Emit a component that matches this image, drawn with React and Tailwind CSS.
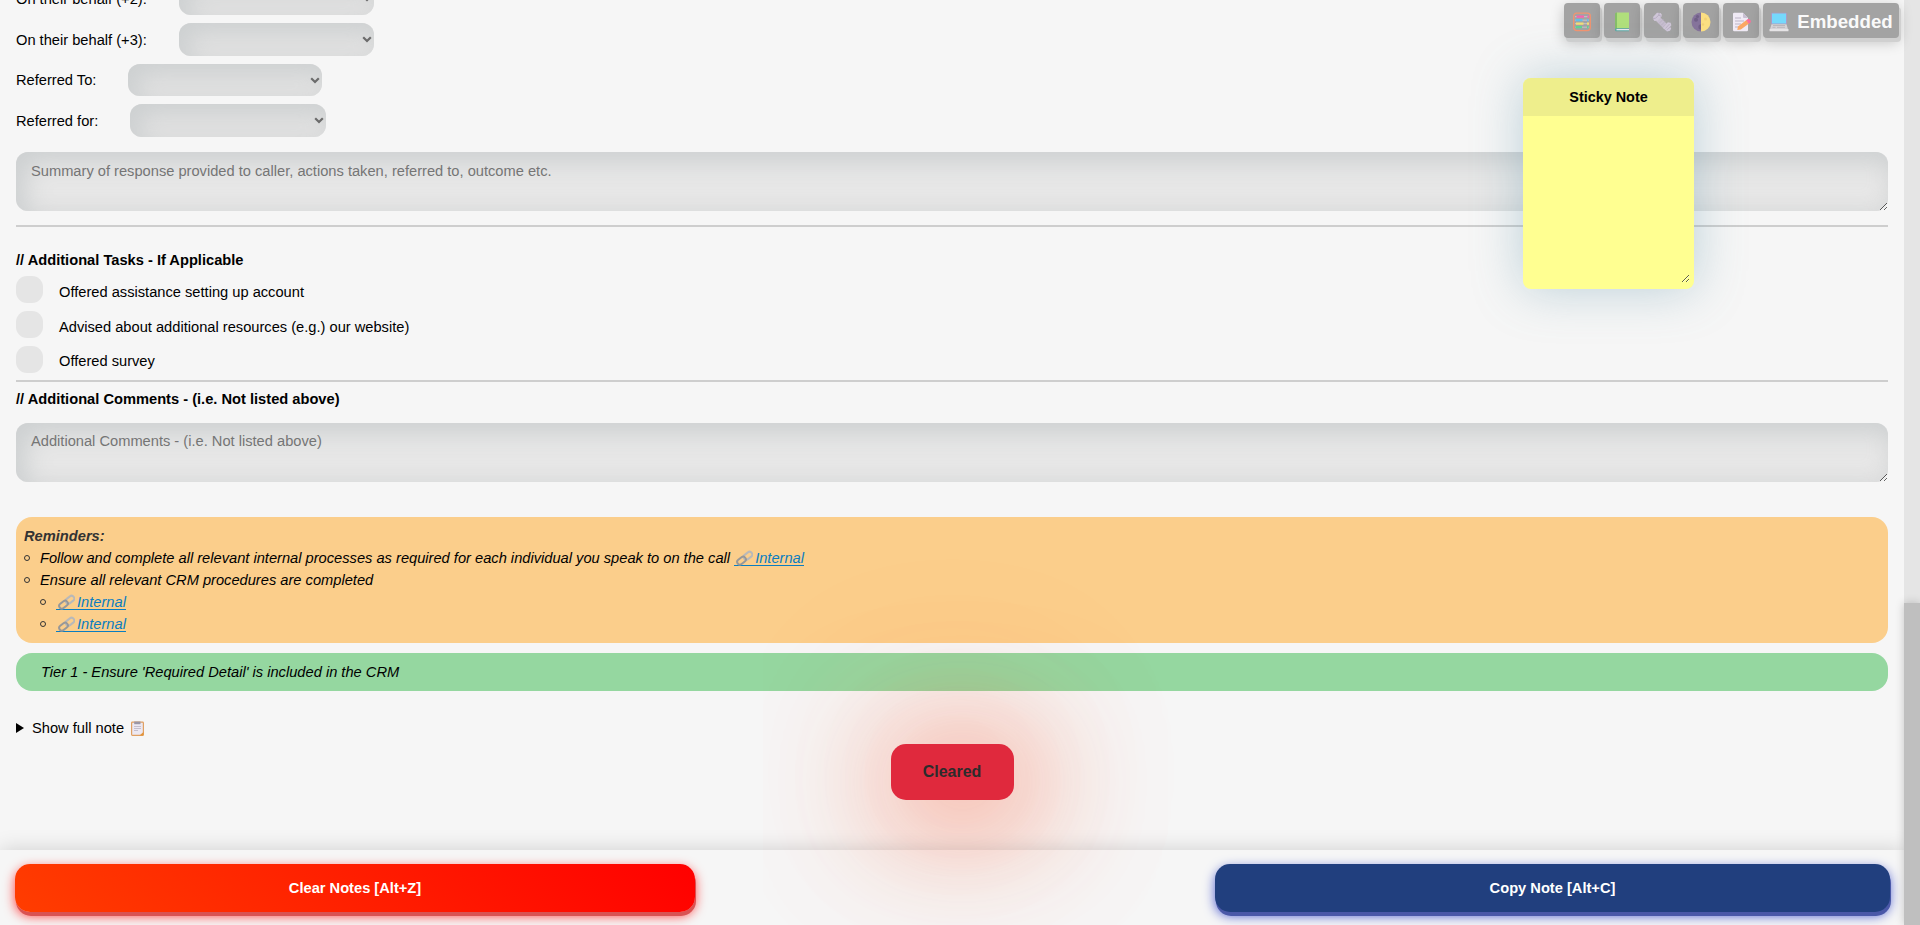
import React from "react";

const inset = "shadow-[inset_10px_10px_24px_#cdd0d1,inset_-4px_-4px_20px_#e0e0e0]";

function SelectRow({ label, row, select }) {
  return (
    <div className={"flex items-center " + row}>
      <span className="whitespace-nowrap text-[14.667px] leading-[18px] text-black">{label}</span>
      <button aria-label={label} className={"flex shrink-0 items-center justify-end rounded-[12px] bg-[#e2e2e2] pr-[2px] " + inset + " " + select}>
        <svg width="10" height="7" viewBox="0 0 10 7" fill="none">
          <path d="M1.200 1.200L5 5l3.800-3.800" stroke="#6b6b6b" strokeWidth="2.200" />
        </svg>
      </button>
    </div>
  );
}

function Check({ label, row, text }) {
  return (
    <div className={"flex items-start " + row}>
      <span className="h-[27px] w-[27px] shrink-0 rounded-[11px] bg-[#e5e5e5]" />
      <span className={"ml-4 text-[14.667px] leading-[18px] " + text}>{label}</span>
    </div>
  );
}

function Area({ placeholder, className }) {
  return (
    <textarea
      placeholder={placeholder}
      className={"block h-[59px] w-full shrink-0 rounded-[12px] border-0 bg-[#e7e7e7] px-[15px] text-[14.667px] leading-[18px] placeholder:text-[#757575] shadow-[inset_10px_10px_26px_#cdd0d1,inset_-4px_-4px_20px_#e0e0e0] resize " + className}
    />
  );
}

function LinkText() {
  return (
    <a className="inline-flex h-[16px] items-baseline border-b border-[#0a7dc0] leading-[17px] text-[#0a7dc0]">
      <svg className="ml-[2px] mr-[2px] self-start" width="17" height="16" viewBox="0 0 17 16" fill="none" strokeWidth="2">
        <rect x="7.2" y="3" width="9.5" height="5.4" rx="2.7" transform="rotate(-38 12 5.7)" stroke="#b9b9b9" />
        <rect x="0.8" y="8" width="9.5" height="5.4" rx="2.7" transform="rotate(-38 5.5 10.7)" stroke="#989898" />
      </svg>
      Internal
    </a>
  );
}

function Bullet() {
  return <span className="mt-[8px] h-[6px] w-[6px] shrink-0 rounded-full border-[1.5px] border-[#333]" />;
}

function Tool({ children, width }) {
  return (
    <button className={"flex h-[35px] shrink-0 items-center justify-center rounded-[4px] bg-[#a3a3a3] pt-[2px] shadow-[2px_4px_0_#d0d0d0,0_4px_14px_rgba(0,0,0,0.22)] " + width}>
      {children}
    </button>
  );
}

function Abacus() {
  return (
    <svg width="20" height="20" viewBox="0 0 20 20" fill="none">
      <rect x="1.7" y="1.2" width="16.6" height="17.4" rx="3" stroke="#f29470" strokeWidth="1.3" />
      <path d="M3 4.700h14M3 8.200h14M3 11.700h14M3 15.200h14" stroke="#c9c3cb" strokeWidth="1" />
      <path d="M4.500 4.700h7.500M15.500 4.700h1.500" stroke="#f764ae" strokeWidth="2.200" />
      <path d="M3.500 8.200h7M15 8.200h1.500" stroke="#62bdeb" strokeWidth="2.200" />
      <path d="M4 11.700h7.500M15 11.700h2" stroke="#f2df77" strokeWidth="2.200" />
      <path d="M3.500 15.200h6.500M15 15.200h1.500" stroke="#5fd493" strokeWidth="2.200" />
    </svg>
  );
}

function Book() {
  return (
    <svg width="20" height="20" viewBox="0 0 20 20">
      <path d="M4.5.5H17v16H4.5z" fill="#b0df7c" />
      <path d="M3 2Q3 .5 4.5.5H5v17H3z" fill="#86bd69" />
      <path d="M3.500 16.200H17v3H4.500Q3 19.200 3 17.700z" fill="#58a7a1" />
      <path d="M4.500 17H17v1.300H4.500z" fill="#e8e4ef" />
    </svg>
  );
}

function Bolt() {
  return (
    <svg width="20" height="20" viewBox="0 0 20 20">
      <path d="M6 7l8 8" stroke="#c6bdcf" strokeWidth="5.500" />
      <path d="M7 11.500l4.500-4.500M9 13.500l4-4M11 15.500l4-4" stroke="#b6adc0" strokeWidth=".8" />
      <path d="M.8 6.500L1.500 4.500 5 .8l3.500.2L9.800 2.500 9.500 4.500 5.500 8.800 2.500 9z" fill="#cfc6d8" />
      <path d="M1 6.500l2.500-.2L6.800 3l.4-2M6.800 3l2.700 1.500" stroke="#b3a9be" strokeWidth=".9" fill="none" />
      <path d="M11 16l4.800-5.800 2.800.6.8 2.400-1.400 1.600 1.200 1.800-1.200 2.200-3 .6z" fill="#cfc6d8" />
      <path d="M13.500 16.500l4-4.500M14.500 18.200l4-3.500" stroke="#b9afc3" strokeWidth=".9" />
    </svg>
  );
}

function Moon() {
  return (
    <svg width="20" height="20" viewBox="0 0 20 20">
      <path d="M10 .5a9.500 9.500 0 0 0 0 19z" fill="#85739b" />
      <path d="M10 .5a9.500 9.500 0 0 1 0 19z" fill="#fbdf82" />
      <circle cx="6.500" cy="4.500" r="1.600" fill="#705f87" />
      <circle cx="5" cy="7.800" r="2" fill="#705f87" />
      <path d="M10 12.300a2.600 2.600 0 0 0 0 5.200z" fill="#705f87" />
      <circle cx="14.500" cy="7" r="1.500" fill="#f3d274" />
      <circle cx="12" cy="12.500" r="1.200" fill="#f3d274" />
    </svg>
  );
}

function Memo() {
  return (
    <svg width="20" height="20" viewBox="0 0 20 20">
      <path d="M2 2Q2 .8 3.200.8H12L17 6v12q0 1.300-1.200 1.300H3.200Q2 19.300 2 18z" fill="#f0eaf5" />
      <path d="M12 .8L17 6h-4q-1 0-1-1z" fill="#c9bfd3" />
      <path d="M4 6h6M4 9h9M4 12h6M4 15h4" stroke="#bcb3c6" strokeWidth="1" />
      <path d="M7 14.500L15.500 8l2.600 3.500L9.800 17.500 6.300 18z" fill="#fba763" />
      <path d="M15.200 8.300l1.700-1.200q1.200-.6 2 .4l.8 1.200q.6 1.200-.4 2l-1.500 1z" fill="#fb6f9b" />
    </svg>
  );
}

function Laptop() {
  return (
    <svg width="20" height="20" viewBox="0 0 20 20">
      <path d="M2 2q0-1.300 1.300-1.300h13.400Q18 .7 18 2v10H2z" fill="#a99bc6" />
      <path d="M3 1.500h14V11.500H3z" fill="#75d9fc" />
      <path d="M2.500 12.200h15l1.500 5H1z" fill="#d5d2d6" />
      <path d="M4 13.500h12M3.500 15.300h3M8 15.300h8" stroke="#b3afb5" strokeWidth=".8" />
      <path d="M.5 17h19v1.700q0 .6-.6.6H1.100q-.6 0-.6-.6z" fill="#e6e4e6" />
    </svg>
  );
}

export default function App() {
  return (
    <div className="relative flex h-[925px] w-[1920px] overflow-hidden bg-[#f5f5f5] font-['Liberation_Sans',Arial,sans-serif] text-[14.667px] text-black">
      <main className="flex w-[1904px] shrink-0 flex-col">
        <div className="flex h-[850px] flex-col overflow-hidden bg-[#f6f6f6] px-4">
          <SelectRow label="On their behalf (+2):" row="mt-[-18px] h-[33px] shrink-0" select="ml-[32px] h-[33px] w-[195px]" />
          <SelectRow label="On their behalf (+3):" row="mt-2 h-[33px] shrink-0" select="ml-[32px] h-[33px] w-[195px]" />
          <SelectRow label="Referred To:" row="mt-2 h-[32px] shrink-0" select="ml-[32px] h-[32px] w-[194px]" />
          <SelectRow label="Referred for:" row="mt-2 h-[33px] shrink-0" select="ml-[32px] h-[33px] w-[196px]" />
          <Area placeholder="Summary of response provided to caller, actions taken, referred to, outcome etc." className="mt-[15px] py-[10px]" />
          <div className="mt-[14px] h-[2px] shrink-0 bg-[#cecece]" />
          <h2 className="mt-[24px] h-[18px] shrink-0 text-[14.667px] font-bold leading-[18px]">// Additional Tasks - If Applicable</h2>
          <Check label="Offered assistance setting up account" row="mt-[7px] h-[35px] shrink-0" text="mt-[7px]" />
          <Check label="Advised about additional resources (e.g.) our website)" row="h-[35px] shrink-0" text="mt-[7px]" />
          <Check label="Offered survey" row="h-[34px] shrink-0" text="mt-[6px]" />
          <div className="h-[2px] shrink-0 bg-[#cecece]" />
          <h2 className="mt-[8px] h-[18px] shrink-0 text-[14.667px] font-bold leading-[18px]">// Additional Comments - (i.e. Not listed above)</h2>
          <Area placeholder="Additional Comments - (i.e. Not listed above)" className="mt-[15px] py-[9px]" />
          <section className="mt-[35px] flex h-[126px] shrink-0 flex-col rounded-[16px] bg-[#fbce8b] px-2 pt-[8px] italic leading-[22px]">
            <strong className="text-[#333]">Reminders:</strong>
            <div className="flex h-[22px]"><Bullet /><span className="ml-[10px]">Follow and complete all relevant internal processes as required for each individual you speak to on the call <LinkText /></span></div>
            <div className="flex h-[22px]"><Bullet /><span className="ml-[10px]">Ensure all relevant CRM procedures are completed</span></div>
            <div className="ml-4 flex h-[22px]"><Bullet /><span className="ml-[10px]"><LinkText /></span></div>
            <div className="ml-4 flex h-[22px]"><Bullet /><span className="ml-[10px]"><LinkText /></span></div>
          </section>
          <section className="mt-[10px] flex h-[38px] shrink-0 items-center rounded-[16px] bg-[#95d7a0] px-[25px] italic">Tier 1 - Ensure 'Required Detail' is included in the CRM</section>
          <div className="mt-[27px] flex h-5 shrink-0 items-center">
            <svg width="8" height="10" viewBox="0 0 8 10"><path d="M0 0l8 5-8 5z" /></svg>
            <span className="ml-[8px]">Show full note</span>
            <svg className="ml-[7px]" width="13" height="15" viewBox="0 0 13 15">
              <rect x=".6" y="1.200" width="11.800" height="13.200" rx=".8" fill="#ece8f2" stroke="#e0a063" strokeWidth="1.200" />
              <path d="M3.200.5h6.300v2.700H3.200z" fill="#9a96a5" />
              <path d="M3 5.500h7M3 7.500h7M3 9.500h4" stroke="#bab4c3" strokeWidth=".8" />
              <path d="M12.500 11v3.500h-4z" fill="#e39438" />
            </svg>
          </div>
        </div>
        <footer className="flex h-[75px] shrink-0 items-start justify-between bg-[#f6f6f6] pl-[15px] pr-[14px] pt-[14px] shadow-[0_0_20px_rgba(0,0,0,0.16)]">
          <button className="h-[48px] w-[680px] rounded-[15px] bg-[linear-gradient(45deg,#ff3d00,#ff0000)] pb-px text-[14.667px] font-bold text-white shadow-[1px_4px_0_#d95353,0_4px_12px_#ff4040]">Clear Notes [Alt+Z]</button>
          <button className="h-[48px] w-[675px] rounded-[15px] bg-[#213f7e] pb-px text-[14.667px] font-bold text-white shadow-[1px_4px_0_#4a58a8,0_4px_12px_#5060d0]">Copy Note [Alt+C]</button>
        </footer>
      </main>
      <aside className="flex w-4 flex-col bg-[#e5e5e5] pt-[603px]">
        <div className="flex-1 bg-[#bfbfbf] shadow-[0_0_10px_rgba(0,0,0,0.2)]" />
      </aside>

      <nav className="absolute left-[1564px] top-[3px] flex">
        <div className="flex gap-1">
          <Tool width="w-[36px]"><Abacus /></Tool>
          <Tool width="w-[36px]"><Book /></Tool>
          <Tool width="w-[35px]"><Bolt /></Tool>
          <Tool width="w-[36px]"><Moon /></Tool>
          <Tool width="w-[36px]"><Memo /></Tool>
          <Tool width="w-[136px]"><Laptop /><span className="ml-[8px] text-[18.667px] font-bold text-[#fafafa]">Embedded</span></Tool>
        </div>
      </nav>

      <div className="absolute left-[1523px] top-[78px] flex h-[211px] w-[171px] flex-col rounded-[8px] bg-[#ffff91] shadow-[0_0_50px_rgba(90,145,165,0.38)]">
        <div className="flex h-[38px] items-center justify-center rounded-t-[8px] bg-[#eeee8c] pt-px text-[14.4px] font-bold">Sticky Note</div>
        <textarea aria-label="Note" className="ml-[5px] h-[167px] w-[162px] resize border-0 bg-transparent" />
      </div>

      <div className="absolute left-[890.5px] top-[743.5px] flex h-[56px] w-[123px] items-center justify-center rounded-[15px] bg-[#e0293d] text-[16px] font-bold text-[#2c2c2c] shadow-[10px_10px_120px_12px_rgba(250,90,50,0.65),0_0_200px_rgba(255,80,40,0.3)]">Cleared</div>
    </div>
  );
}
